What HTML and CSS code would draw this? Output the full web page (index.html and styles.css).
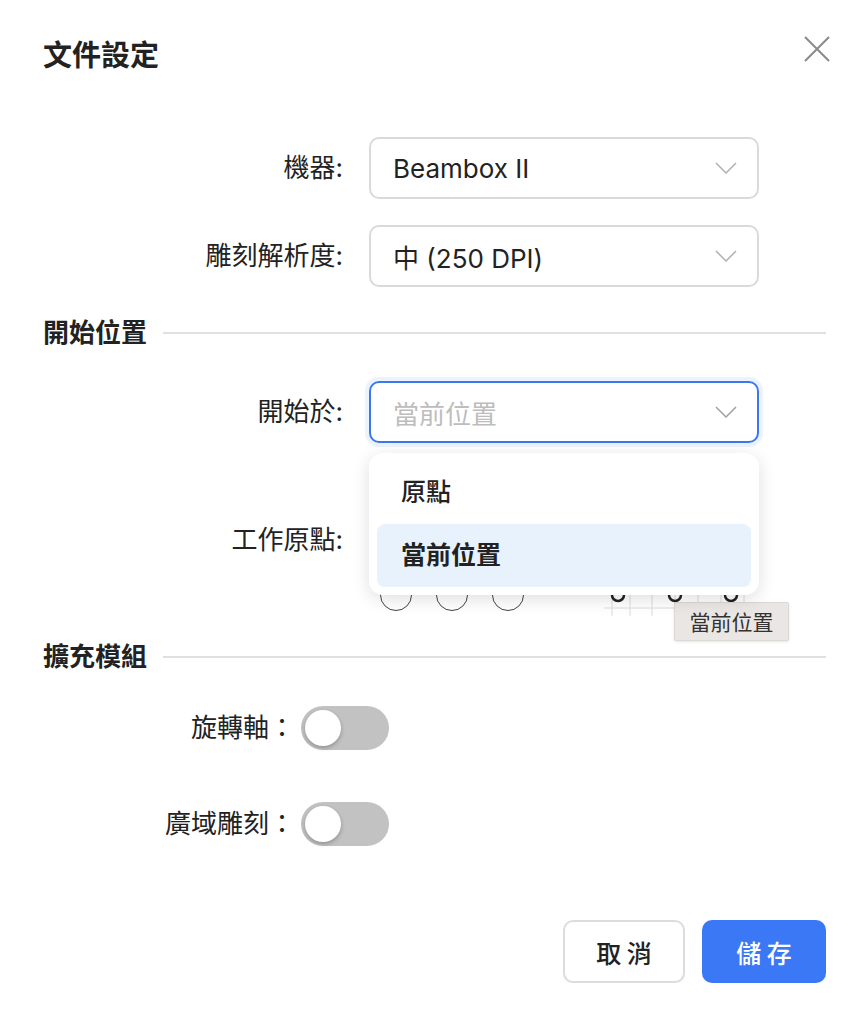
FILE: index.html
```html
<!DOCTYPE html>
<html>

<head>
  <meta charset="utf-8">
  <link rel="stylesheet" href="styles.css">
</head>

<body>
  <div class="dialog">
    <div class="head">
      <div class="title">文件設定</div>
      <button class="close" aria-label="close">
        <svg width="26" height="26" viewBox="0 0 26 26"><path d="M1 1L25 25M25 1L1 25" stroke="#8a8a8a" stroke-width="2" fill="none"/></svg>
      </button>
    </div>

    <div class="form">
      <div class="row">
        <label>機器:</label>
        <div class="select">
          <span>Beambox II</span>
          <svg class="arrow" width="22" height="12" viewBox="0 0 22 12"><path d="M1 1L11 11L21 1" stroke="#b0b0b0" stroke-width="1.5" fill="none"/></svg>
        </div>
      </div>
      <div class="row">
        <label>雕刻解析度:</label>
        <div class="select">
          <span>中 (250 DPI)</span>
          <svg class="arrow" width="22" height="12" viewBox="0 0 22 12"><path d="M1 1L11 11L21 1" stroke="#b0b0b0" stroke-width="1.5" fill="none"/></svg>
        </div>
      </div>

      <div class="section">
        <div class="section-title">開始位置</div>
        <div class="section-line"></div>
      </div>

      <div class="row">
        <label>開始於:</label>
        <div class="select focused">
          <span class="placeholder">當前位置</span>
          <svg class="arrow" width="22" height="12" viewBox="0 0 22 12"><path d="M1 1L11 11L21 1" stroke="#a0a0a0" stroke-width="1.5" fill="none"/></svg>
          <div class="menu">
            <div class="option">原點</div>
            <div class="option selected">當前位置</div>
          </div>
        </div>
      </div>

      <div class="row origin-row">
        <label>工作原點:</label>
        <div class="origin">
          <svg class="grid" width="150" height="40" viewBox="0 0 150 40">
            <g stroke="#dcdcdc" stroke-width="1">
              <path d="M0 27H145"/>
              <path d="M8 0V35M26 0V35M48 0V35M71 0V35M94 0V35M117 0V35M140 0V35"/>
            </g>
            <g stroke="#222" stroke-width="2.5" fill="none">
              <circle cx="14" cy="14" r="6"/>
              <circle cx="71" cy="14" r="6"/>
              <circle cx="127" cy="14" r="6"/>
            </g>
          </svg>
          <div class="radios">
            <span class="radio"></span>
            <span class="radio"></span>
            <span class="radio"></span>
          </div>
          <div class="tooltip">當前位置</div>
        </div>
      </div>

      <div class="section">
        <div class="section-title">擴充模組</div>
        <div class="section-line"></div>
      </div>

      <div class="switch-row">
        <label>旋轉軸：</label>
        <span class="switch"><span class="knob"></span></span>
      </div>
      <div class="switch-row">
        <label>廣域雕刻：</label>
        <span class="switch"><span class="knob"></span></span>
      </div>
    </div>

    <div class="footer">
      <button class="btn">取 消</button>
      <button class="btn primary">儲 存</button>
    </div>
  </div>
</body>

</html>
```

FILE: styles.css
```css
* {
  box-sizing: border-box;
}

body {
  margin: 0;
  background: #fff;
  color: #222;
  font-family: "Inter", "Noto Sans CJK TC", sans-serif;
}

.dialog {
  width: 868px;
  padding: 0 42px 0 43px;
}

.head {
  display: flex;
  justify-content: space-between;
  align-items: flex-start;
  padding-top: 36px;
}

.title {
  font-size: 29px;
  font-weight: 700;
  line-height: 40px;
}

.close {
  border: 0;
  background: none;
  padding: 0;
  margin: 0 -4px 0 0;
  width: 26px;
  height: 26px;
  cursor: pointer;
}

.form {
  margin-top: 61px;
}

.row {
  display: grid;
  grid-template-columns: 300px 390px;
  column-gap: 26px;
  align-items: center;
  margin-bottom: 26px;
}

.row label,
.switch-row label {
  text-align: right;
  font-size: 26px;
  line-height: 32px;
}

.select {
  position: relative;
  height: 62px;
  border: 2px solid #dadada;
  border-radius: 10px;
  display: flex;
  align-items: center;
  padding: 0 22px;
  font-size: 26px;
}

.select span {
  flex: 1;
}

.select .arrow {
  position: absolute;
  right: 20px;
  top: 23px;
}

.select.focused {
  border-color: #3a78f2;
  box-shadow: 0 0 0 4px #edf3fd;
}

.placeholder {
  color: #bdbdbd;
}

.menu {
  position: absolute;
  left: -2px;
  top: 70px;
  width: 390px;
  padding: 8px;
  background: #fff;
  border-radius: 14px;
  box-shadow: 0 4px 18px rgba(0, 0, 0, 0.13);
  z-index: 2;
}

.option {
  height: 63px;
  line-height: 63px;
  padding-left: 24px;
  border-radius: 8px;
  font-size: 25px;
  font-weight: 500;
}

.option.selected {
  background: #e8f2fd;
  font-weight: 700;
}

.section {
  display: flex;
  align-items: center;
  gap: 16px;
  margin: 30px 0 32px;
}

.section-title {
  font-size: 26px;
  font-weight: 700;
  line-height: 32px;
}

.section-line {
  flex: 1;
  height: 2px;
  background: #e0e0e0;
}

.origin-row {
  margin-bottom: 30px;
}

.origin {
  position: relative;
  height: 142px;
}

.grid {
  position: absolute;
  left: 235px;
  top: 112px;
}

.radios {
  position: absolute;
  left: 11px;
  bottom: 0;
  display: flex;
  gap: 24px;
}

.radio {
  width: 32px;
  height: 32px;
  border: 1.5px solid #444;
  border-radius: 50%;
}

.tooltip {
  position: absolute;
  left: 305px;
  top: 133px;
  width: 115px;
  height: 39px;
  line-height: 39px;
  text-align: center;
  font-size: 21px;
  color: #333;
  background: #e9e6e3;
  border: 1px solid #dcd8d4;
  border-radius: 2px;
  box-shadow: 0 1px 3px rgba(0, 0, 0, 0.1);
}

.switch-row {
  display: grid;
  grid-template-columns: 252px 88px;
  column-gap: 6px;
  align-items: center;
  margin-top: 33px;
  margin-bottom: 52px;
}

.switch {
  position: relative;
  width: 88px;
  height: 44px;
  border-radius: 22px;
  background: #c2c2c2;
}

.knob {
  position: absolute;
  left: 4px;
  top: 4px;
  width: 36px;
  height: 36px;
  border-radius: 50%;
  background: #fff;
  box-shadow: 0 2px 4px rgba(0, 0, 0, 0.25);
}

.footer {
  display: flex;
  justify-content: flex-end;
  gap: 17px;
  margin-top: 74px;
}

.btn {
  width: 122px;
  height: 63px;
  border: 2px solid #dcdcdc;
  border-radius: 10px;
  background: #fff;
  color: #222;
  font-family: "Noto Sans CJK TC", sans-serif;
  font-size: 25px;
  font-weight: 500;
  box-shadow: 0 3px 0 rgba(0, 0, 0, 0.02);
}

.btn.primary {
  width: 124px;
  border-color: #3a78f5;
  background: #3a78f5;
  color: #fff;
}
```
